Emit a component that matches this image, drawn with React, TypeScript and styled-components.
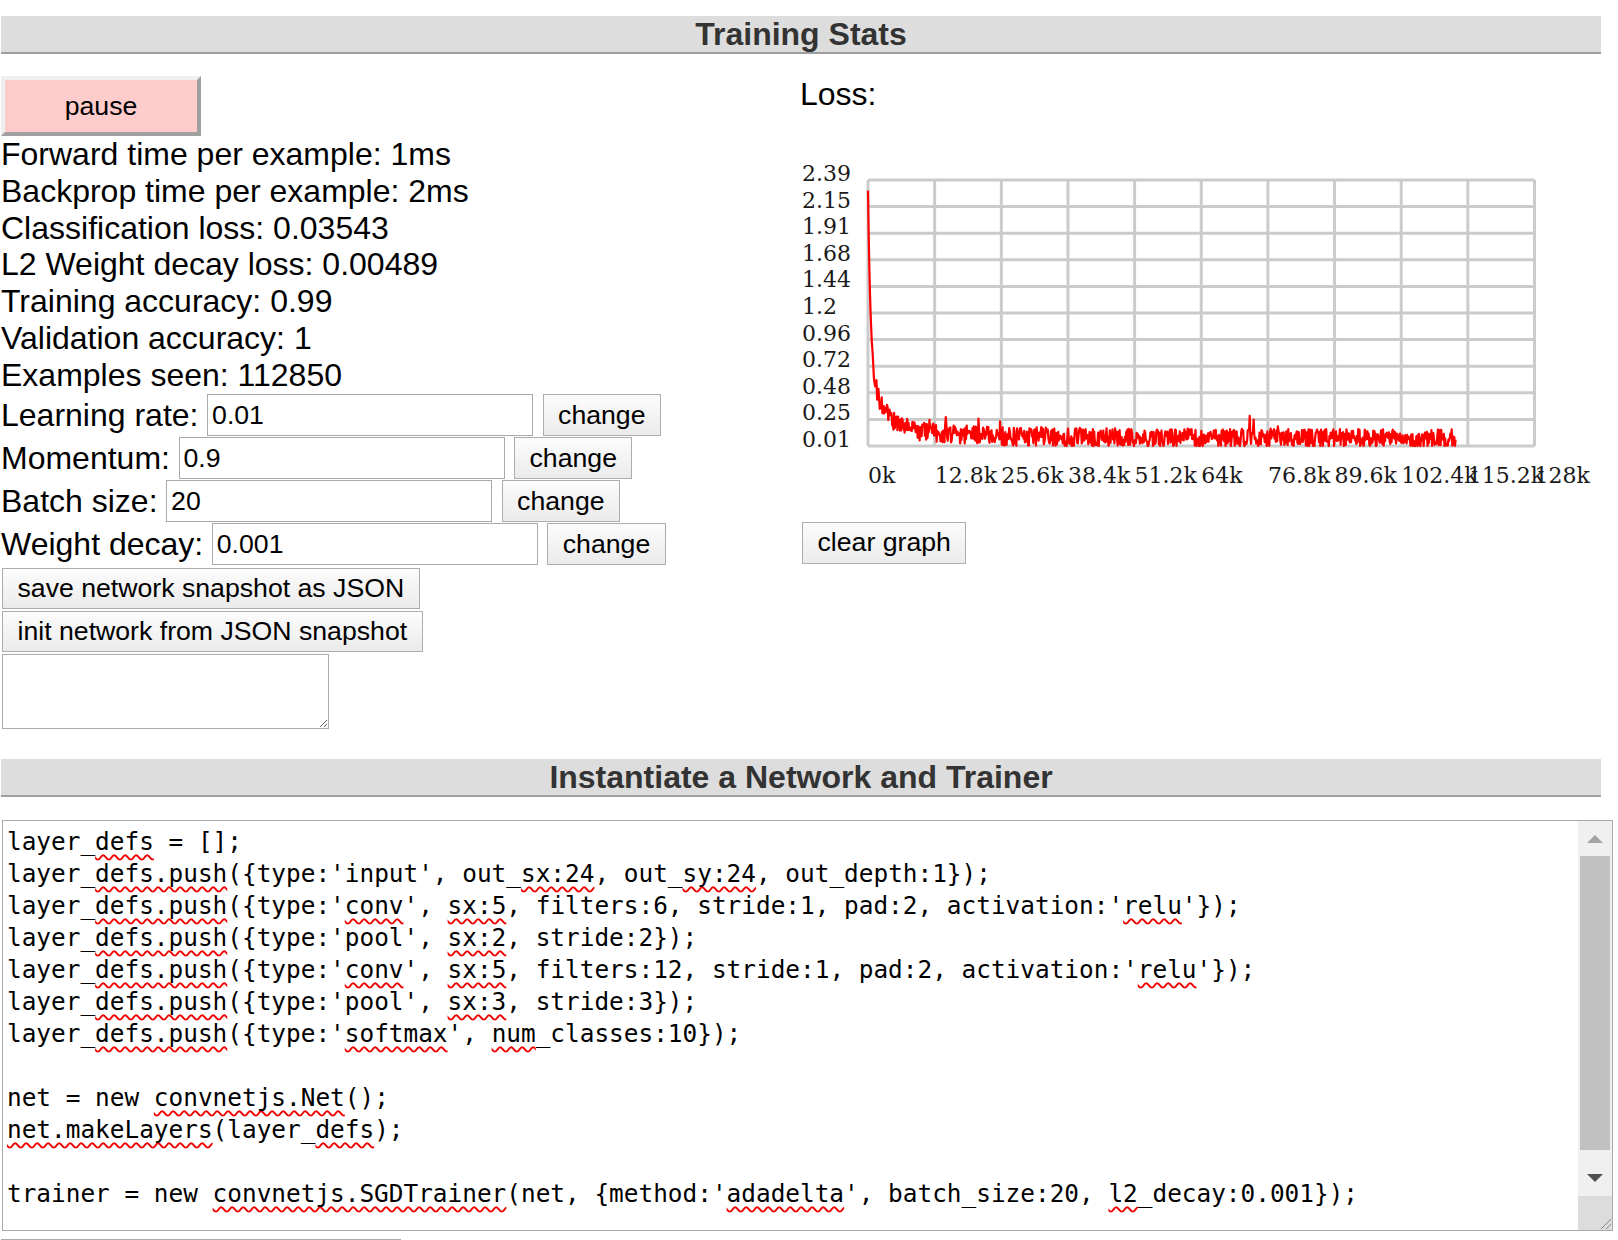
import React from 'react';
import styled, { createGlobalStyle } from 'styled-components';

const Global = createGlobalStyle`
  html, body { margin: 0; padding: 0; background: #fff; }
  body { font-family: "Liberation Sans", Arial, sans-serif; color: #000; }
`;

const Page = styled.div`
  width: 1600px;
  padding: 16px 0 0 1px;
`;

const SectionHeader = styled.div<{ $top?: number }>`
  margin-top: ${(p) => p.$top ?? 0}px;
  background: #ddd;
  border-bottom: 2px solid #9e9e9e;
  height: 36px;
  line-height: 36px;
  text-align: center;
  font-weight: bold;
  font-size: 32px;
  color: #333;
`;

const Columns = styled.div`
  display: flex;
  padding-top: 22px;
`;

const LeftCol = styled.div`
  width: 799px;
`;

const RightCol = styled.div`
  width: 800px;
`;

const PauseButton = styled.button`
  display: block;
  width: 200px;
  height: 60px;
  padding: 0;
  background: #ffcccc;
  border: 4px solid;
  border-color: #efefef #a0a0a0 #a0a0a0 #efefef;
  font-family: "Liberation Sans", Arial, sans-serif;
  font-size: 26.67px;
  color: #000;
`;

const StatLine = styled.div`
  font-size: 32px;
  line-height: 36.8px;
  white-space: nowrap;
`;

const ParamRow = styled.div`
  display: flex;
  align-items: center;
  height: 43px;
  font-size: 32px;
  white-space: nowrap;
`;

const ParamInput = styled.input`
  box-sizing: border-box;
  width: 326px;
  height: 42px;
  margin: 0 0 0 8.6px;
  padding: 0 4px;
  border: 1px solid #a9a9a9;
  border-radius: 0;
  font-family: "Liberation Sans", Arial, sans-serif;
  font-size: 26.67px;
  color: #000;
  background: #fff;
  outline: none;
`;

const PlainButton = styled.button<{ $h?: number }>`
  box-sizing: border-box;
  height: ${(p) => p.$h ?? 42}px;
  padding: 0 14.5px;
  border: 1px solid #adadad;
  border-radius: 0;
  background: linear-gradient(#fcfcfc, #ebebeb);
  font-family: "Liberation Sans", Arial, sans-serif;
  font-size: 26.67px;
  color: #000;
  white-space: nowrap;
`;

const ChangeButton = styled(PlainButton)`
  margin-left: 9.5px;
`;

const BlockButton = styled(PlainButton)`
  display: block;
  margin: 2px 0 0 1px;
`;

const SnapshotArea = styled.textarea`
  display: block;
  box-sizing: border-box;
  width: 327px;
  height: 75px;
  margin: 2px 0 0 1px;
  border: 1px solid #a9a9a9;
  border-radius: 0;
  padding: 2px;
  font-family: "Liberation Mono", monospace;
  font-size: 20px;
`;

const LossLabel = styled.div`
  font-size: 32px;
  line-height: 36.8px;
`;

const ChartSvg = styled.svg`
  display: block;
`;

const ClearButton = styled(PlainButton)`
  display: block;
  margin: 9px 0 0 2px;
`;

const CodeBox = styled.div`
  box-sizing: border-box;
  display: flex;
  width: 1611px;
  height: 411px;
  margin: 23px 0 0 1px;
  border: 1px solid #a9a9a9;
  background: #fff;
`;

const CodeText = styled.div`
  flex: 1;
  overflow: hidden;
  padding: 5px 4px;
  font-family: "DejaVu Sans Mono", "Liberation Mono", monospace;
  font-size: 24.4px;
  line-height: 32px;
  white-space: pre;
  color: #000;
`;

const Misspelled = styled.span`
  text-decoration: underline wavy #ee0000;
  text-decoration-thickness: 1.5px;
  text-underline-offset: 4px;
  text-decoration-skip-ink: none;
`;

const ScrollBar = styled.div`
  width: 34px;
  display: flex;
  flex-direction: column;
  background: #f0f0f0;
`;

const ScrollArrow = styled.div`
  height: 35px;
  display: flex;
  align-items: center;
  justify-content: center;
`;

const ScrollTrack = styled.div`
  flex: 1;
  display: flex;
  flex-direction: column;
  align-items: center;
`;

const ScrollThumb = styled.div`
  width: 30px;
  height: 294px;
  background: #c1c1c1;
`;

const ResizeCorner = styled.div`
  height: 34px;
  background: #dcdcdc;
  display: flex;
  align-items: flex-end;
  justify-content: flex-end;
`;

const FooterEdge = styled.div`
  width: 400px;
  height: 20px;
  margin-top: 8px;
  border-top: 1px solid #a9a9a9;
`;

/* ---------- chart ---------- */
const PL = 68;
const PR = 734.5;
const PT = 67;
const PB = 333;
const yLabels = ['2.39', '2.15', '1.91', '1.68', '1.44', '1.2', '0.96', '0.72', '0.48', '0.25', '0.01'];
const xLabels = ['0k', '12.8k', '25.6k', '38.4k', '51.2k', '64k', '76.8k', '89.6k', '102.4k', '115.2k', '128k'];

function mulberry32(seed: number) {
  let a = seed;
  return () => {
    a |= 0;
    a = (a + 0x6d2b79f5) | 0;
    let t = Math.imul(a ^ (a >>> 15), 1 | a);
    t = (t + Math.imul(t ^ (t >>> 7), 61 | t)) ^ t;
    return ((t ^ (t >>> 14)) >>> 0) / 4294967296;
  };
}

function buildLossPath(): string {
  const rnd = mulberry32(1234567);
  const n = 900;
  const maxX = 112850;
  const pts: string[] = [];
  for (let i = 0; i < n; i++) {
    const x = (i * maxX) / (n - 1);
    let v =
      1.6 * Math.exp(-x / 500) +
      0.55 * Math.exp(-x / 3000) +
      0.075 +
      0.07 * Math.exp(-x / 25000);
    if (x > 800) {
      v += (rnd() - 0.5) * 0.17;
      if (rnd() < 0.04) v += rnd() * 0.14;
    }
    v = Math.max(0.01, Math.min(2.39, v));
    const px = PL + (x / 128000) * (PR - PL);
    const py = PB - ((v - 0.01) / 2.38) * (PB - PT);
    pts.push(`${i === 0 ? 'M' : 'L'}${px.toFixed(2)},${py.toFixed(2)}`);
  }
  return pts.join(' ');
}

const lossPath = buildLossPath();

const LossChart: React.FC = () => {
  const colW = (PR - PL) / 10;
  const rowH = (PB - PT) / 10;
  return (
    <ChartSvg width={800} height={400} viewBox="0 0 800 400">
      <rect x={PL} y={PT} width={PR - PL} height={PB - PT} fill="#fff" />
      {Array.from({ length: 11 }).map((_, i) => (
        <line key={`v${i}`} x1={PL + i * colW} x2={PL + i * colW} y1={PT} y2={PB} stroke="#cbcbcb" strokeWidth={3} />
      ))}
      {Array.from({ length: 11 }).map((_, j) => (
        <line key={`h${j}`} x1={PL} x2={PR} y1={PT + j * rowH} y2={PT + j * rowH} stroke="#cbcbcb" strokeWidth={3} />
      ))}
      {yLabels.map((l, j) => (
        <text
          key={l}
          x={2}
          y={PT + j * rowH - 6.5}
          dominantBaseline="central"
          fontFamily="'DejaVu Serif', 'Liberation Serif', serif"
          fontSize={22}
          fill="#1a1a1a"
        >
          {l}
        </text>
      ))}
      {xLabels.map((l, i) => (
        <text
          key={l}
          x={PL + i * colW}
          y={362}
          dominantBaseline="central"
          fontFamily="'DejaVu Serif', 'Liberation Serif', serif"
          fontSize={22}
          fill="#1a1a1a"
        >
          {l}
        </text>
      ))}
      <path d={lossPath} fill="none" stroke="#ff0000" strokeWidth={2.2} strokeLinejoin="round" />
    </ChartSvg>
  );
};

/* ---------- code ---------- */
const codeLines = [
  'layer_[[defs]] = [];',
  "layer_[[defs.push]]({type:'input', out_[[sx:24]], out_[[sy:24]], out_depth:1});",
  "layer_[[defs.push]]({type:'[[conv]]', [[sx:5]], filters:6, stride:1, pad:2, activation:'[[relu]]'});",
  "layer_[[defs.push]]({type:'pool', [[sx:2]], stride:2});",
  "layer_[[defs.push]]({type:'[[conv]]', [[sx:5]], filters:12, stride:1, pad:2, activation:'[[relu]]'});",
  "layer_[[defs.push]]({type:'pool', [[sx:3]], stride:3});",
  "layer_[[defs.push]]({type:'[[softmax]]', [[num]]_classes:10});",
  '',
  'net = new [[convnetjs.Net]]();',
  '[[net.makeLayers]](layer_[[defs]]);',
  '',
  "trainer = new [[convnetjs.SGDTrainer]](net, {method:'[[adadelta]]', batch_size:20, [[l2]]_decay:0.001});",
];

const CodeLine: React.FC<{ src: string }> = ({ src }) => {
  const parts = src.split(/\[\[(.+?)\]\]/);
  return (
    <div>
      {src === '' ? '\u00a0' : null}
      {parts.map((p, i) => (i % 2 === 1 ? <Misspelled key={i}>{p}</Misspelled> : <React.Fragment key={i}>{p}</React.Fragment>))}
    </div>
  );
};

const params = [
  { label: 'Learning rate:', value: '0.01' },
  { label: 'Momentum:', value: '0.9' },
  { label: 'Batch size:', value: '20' },
  { label: 'Weight decay:', value: '0.001' },
];

const stats = [
  'Forward time per example: 1ms',
  'Backprop time per example: 2ms',
  'Classification loss: 0.03543',
  'L2 Weight decay loss: 0.00489',
  'Training accuracy: 0.99',
  'Validation accuracy: 1',
  'Examples seen: 112850',
];

export default function App() {
  return (
    <Page>
      <Global />
      <SectionHeader>Training Stats</SectionHeader>
      <Columns>
        <LeftCol>
          <PauseButton>pause</PauseButton>
          {stats.map((s) => (
            <StatLine key={s}>{s}</StatLine>
          ))}
          {params.map((p) => (
            <ParamRow key={p.label}>
              <span>{p.label}</span>
              <ParamInput defaultValue={p.value} />
              <ChangeButton>change</ChangeButton>
            </ParamRow>
          ))}
          <BlockButton $h={41}>save network snapshot as JSON</BlockButton>
          <BlockButton $h={41}>init network from JSON snapshot</BlockButton>
          <SnapshotArea />
        </LeftCol>
        <RightCol>
          <LossLabel>Loss:</LossLabel>
          <LossChart />
          <ClearButton>clear graph</ClearButton>
        </RightCol>
      </Columns>
      <SectionHeader $top={30}>Instantiate a Network and Trainer</SectionHeader>
      <CodeBox>
        <CodeText>
          {codeLines.map((l, i) => (
            <CodeLine key={i} src={l} />
          ))}
        </CodeText>
        <ScrollBar>
          <ScrollArrow>
            <svg width="16" height="9" viewBox="0 0 16 9">
              <path d="M0 9 L8 1 L16 9 Z" fill="#a3a3a3" />
            </svg>
          </ScrollArrow>
          <ScrollTrack>
            <ScrollThumb />
          </ScrollTrack>
          <ScrollArrow>
            <svg width="16" height="9" viewBox="0 0 16 9">
              <path d="M0 0 L16 0 L8 8 Z" fill="#505050" />
            </svg>
          </ScrollArrow>
          <ResizeCorner>
            <svg width="14" height="14" viewBox="0 0 14 14">
              <path d="M13 3 L3 13 M13 8 L8 13" stroke="#8a8a8a" strokeWidth="1" />
            </svg>
          </ResizeCorner>
        </ScrollBar>
      </CodeBox>
      <FooterEdge />
    </Page>
  );
}
